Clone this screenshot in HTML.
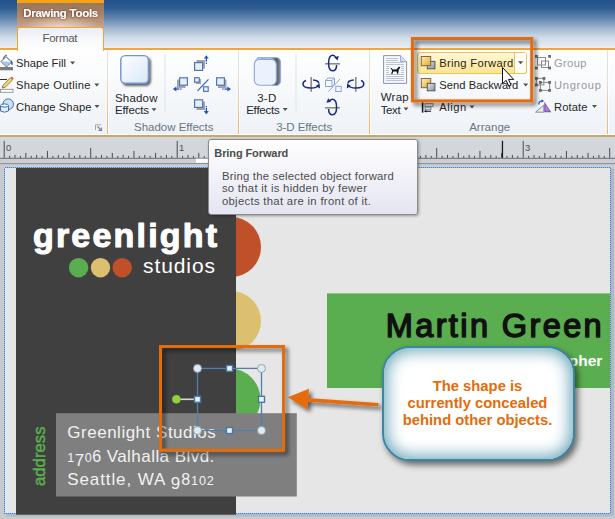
<!DOCTYPE html>
<html><head><meta charset="utf-8">
<style>
*{margin:0;padding:0;box-sizing:border-box}
html,body{width:615px;height:519px;overflow:hidden;background:#c8ccd2;font-family:"Liberation Sans",sans-serif}
.a{position:absolute}
svg{position:absolute;left:0;top:0;overflow:visible}
svg text{font-family:"Liberation Sans",sans-serif;white-space:pre}
</style></head><body>
<div class="a" style="left:0;top:0;width:615px;height:50px;background:linear-gradient(#23508a 0px,#2d5c92 8px,#5f84ae 18px,#9fb5cf 28px,#d2dce8 38px,#e9eef4 48px)"></div>
<div class="a" style="left:17px;top:0;width:87px;height:28px;background:linear-gradient(#f7a115 0,#f7a115 3px,#9a785c 3px,#a48064 12px,#bb967c 22px,#c8a690 28px)"></div>
<div class="a" style="left:17px;top:14px;width:87px;height:14px;background:radial-gradient(ellipse 40px 12px at 50% 100%,rgba(255,235,225,0.75),rgba(255,235,225,0) 100%)"></div>
<div class="a" style="left:0;top:48.3px;width:615px;height:1.5px;background:#f2a53a"></div>
<div class="a" style="left:0;top:50px;width:615px;height:85px;background:linear-gradient(#ffffff 0,#f8fafc 30px,#f1f4f8 70px,#eef1f5 85px)"></div>
<div class="a" style="left:17px;top:27px;width:87px;height:24px;background:linear-gradient(#e9edf2,#f8f9fb 12px,#ffffff);border:1px solid #f2a53a;border-bottom:none;border-radius:3px 3px 0 0"></div>
<div class="a" style="left:18px;top:49px;width:85px;height:3px;background:#ffffff"></div>
<svg width="615" height="519" viewBox="0 0 615 519"><defs><filter id="glow" x="-10%" y="-40%" width="120%" height="180%"><feGaussianBlur in="SourceAlpha" stdDeviation="1.1" result="b"/><feFlood flood-color="#804828" flood-opacity="1"/><feComposite operator="in" in2="b"/><feComponentTransfer><feFuncA type="linear" slope="1.5"/></feComponentTransfer><feMerge><feMergeNode/><feMergeNode in="SourceGraphic"/></feMerge></filter>
<filter id="sh" x="-20%" y="-40%" width="150%" height="200%"><feGaussianBlur in="SourceAlpha" stdDeviation="2.1"/><feOffset dx="2.6" dy="2.6"/><feComponentTransfer><feFuncA type="linear" slope="0.6"/></feComponentTransfer><feMerge><feMergeNode/><feMergeNode in="SourceGraphic"/></feMerge></filter>
<filter id="sh2" x="-20%" y="-20%" width="150%" height="150%"><feGaussianBlur in="SourceAlpha" stdDeviation="1"/><feOffset dx="2" dy="2"/><feComponentTransfer><feFuncA type="linear" slope="0.6"/></feComponentTransfer><feMerge><feMergeNode/><feMergeNode in="SourceGraphic"/></feMerge></filter>
<linearGradient id="gold" x1="0" y1="0" x2="1" y2="1"><stop offset="0" stop-color="#fdf0b8"/><stop offset="1" stop-color="#e8a828"/></linearGradient>
<linearGradient id="grey" x1="0" y1="0" x2="1" y2="1"><stop offset="0" stop-color="#e4e8ee"/><stop offset="1" stop-color="#8a929c"/></linearGradient>
<linearGradient id="lblue" x1="0" y1="0" x2="1" y2="1"><stop offset="0" stop-color="#ffffff"/><stop offset="1" stop-color="#d8e6fa"/></linearGradient>
<linearGradient id="ext" x1="0" y1="0" x2="1" y2="0"><stop offset="0" stop-color="#d8dce2"/><stop offset="0.55" stop-color="#c4c8d0"/><stop offset="0.8" stop-color="#52565e"/><stop offset="1" stop-color="#8a9098"/></linearGradient>
<linearGradient id="sepg" x1="0" y1="0" x2="0" y2="1"><stop offset="0" stop-color="#dde2e8"/><stop offset="0.35" stop-color="#e6dccd"/><stop offset="1" stop-color="#f2b45e"/></linearGradient>
<linearGradient id="btn" x1="0" y1="0" x2="0" y2="1"><stop offset="0" stop-color="#fff9dc"/><stop offset="0.5" stop-color="#ffeeb0"/><stop offset="1" stop-color="#ffe390"/></linearGradient></defs><g filter="url(#glow)"><text x="23.2" y="16.8" font-size="11.5" fill="#ffffff" font-weight="bold" textLength="75" lengthAdjust="spacing" >Drawing Tools</text>
</g><text x="42.5" y="42" font-size="11.5" fill="#595959" textLength="35" lengthAdjust="spacing" >Format</text>
<rect x="107.0" y="50" width="1" height="85" fill="url(#sepg)"/><rect x="108.0" y="50" width="1" height="85" fill="#ffffff" opacity="0.8"/><rect x="238.0" y="50" width="1" height="85" fill="url(#sepg)"/><rect x="239.0" y="50" width="1" height="85" fill="#ffffff" opacity="0.8"/><rect x="369.0" y="50" width="1" height="85" fill="url(#sepg)"/><rect x="370.0" y="50" width="1" height="85" fill="#ffffff" opacity="0.8"/><rect x="607.0" y="50" width="1" height="85" fill="url(#sepg)"/><rect x="608.0" y="50" width="1" height="85" fill="#ffffff" opacity="0.8"/><rect x="164.5" y="54" width="1" height="58" fill="#dfe4ea"/><rect x="295.5" y="54" width="1" height="58" fill="#dfe4ea"/><rect x="0" y="134" width="615" height="1" fill="#ffffff"/><rect x="0" y="135" width="615" height="2" fill="#c9a66c"/>
<g>
<!-- shape fill -->
<path d="M1,61.5 L6,56.5 L11.5,62 L6.5,67 Z" fill="#f4f8fc" stroke="#46505e" stroke-width="1"/>
<path d="M3.5,59 Q4,54.5 7,55.5" fill="none" stroke="#46505e" stroke-width="0.9"/>
<path d="M11,60 Q13.5,62 12.5,65 Q11,65.5 11,63 Z" fill="#2a62c4"/>
<path d="M1.5,61.5 L6.5,66.5 L11,62 Z" fill="#a8c4ec"/>
<rect x="0" y="67" width="13" height="3.3" fill="#7c7c7c"/>
<!-- shape outline -->
<path d="M0,79.5 H7" stroke="#303030" stroke-width="1"/>
<path d="M2.2,88 L3.2,85 L10.5,77.8 L12.6,79.9 L5.3,87.1 Z" fill="#f2d870" stroke="#7c6030" stroke-width="0.8"/>
<path d="M10.5,77.8 L11.5,76.8 Q12.8,76.5 13.6,78.6 L12.6,79.9 Z" fill="#d8684a"/>
<rect x="0.5" y="89.3" width="12.5" height="3" fill="#ffffff" stroke="#909090" stroke-width="0.9"/>
<!-- change shape -->
<circle cx="8.2" cy="104.2" r="5.3" fill="#cfe0f6" stroke="#3e72b4" stroke-width="1"/>
<path d="M0.5,105.5 V111 Q4.5,113.4 8.5,111 V105.5" fill="#e2ecfa" stroke="#3e72b4" stroke-width="1"/>
<ellipse cx="4.5" cy="105.5" rx="4" ry="1.6" fill="#f4f8fe" stroke="#3e72b4" stroke-width="1"/>
<!-- dialog launcher -->
<path d="M95.5,130 V124.8 H101" fill="none" stroke="#9aa0a8" stroke-width="0.9"/>
<path d="M97.5,126.5 L101.5,130.5 M101.5,127.5 V130.5 H98.5" fill="none" stroke="#7a8088" stroke-width="1.1"/>

<!-- shadow effects big -->
<rect x="120.8" y="55.6" width="27.6" height="27.6" rx="4.5" fill="url(#lblue)" stroke="#7093d2" stroke-width="1.4" filter="url(#sh2)"/>
<!-- nudge icons -->
<g stroke-width="1.2">
<rect x="196.5" y="60" width="8.5" height="8.5" fill="#a4a4a4"/>
<rect x="194.6" y="62.6" width="8" height="7.8" fill="#e8f0fc" stroke="#4b74c2"/>
<rect x="177" y="79.5" width="8.5" height="8.5" fill="#a4a4a4"/>
<rect x="179.6" y="77.8" width="7.8" height="7.4" fill="#e8f0fc" stroke="#4b74c2"/>
<rect x="196" y="79" width="5" height="5" fill="#a4a4a4"/>
<rect x="194.6" y="77.8" width="4.6" height="4.4" fill="#eef4fc" stroke="#4b74c2"/>
<rect x="203.6" y="86.8" width="4.6" height="4.6" fill="#eef4fc" stroke="#4b74c2"/>
<path d="M197.5,90.8 L208.5,79.3" stroke="#2a5ac0" stroke-width="1.1"/>
<rect x="218" y="79.5" width="8.5" height="8.5" fill="#a4a4a4"/>
<rect x="216.6" y="77.8" width="7.8" height="7.4" fill="#e8f0fc" stroke="#4b74c2"/>
<rect x="196.5" y="101.5" width="8.5" height="8.5" fill="#a4a4a4"/>
<rect x="194.6" y="99.8" width="8" height="7.6" fill="#e8f0fc" stroke="#4b74c2"/>
</g>
<g fill="#1f56c8" stroke="none">
<path d="M206.3,55.2 L203.8,58.6 H208.8 Z"/><rect x="205.7" y="58" width="1.3" height="3.6"/><rect x="205.7" y="62.6" width="1.3" height="1.3"/>
<path d="M172.8,89 L176.4,86.6 V91.4 Z"/><rect x="176" y="88.4" width="3.4" height="1.3"/><rect x="180.3" y="88.4" width="1.3" height="1.3"/>
<path d="M231,89 L227.4,86.6 V91.4 Z"/><rect x="224.5" y="88.4" width="3.4" height="1.3"/><rect x="222.3" y="88.4" width="1.3" height="1.3"/>
<path d="M206.3,114.4 L203.8,111 H208.8 Z"/><rect x="205.7" y="108" width="1.3" height="3.6"/><rect x="205.7" y="106" width="1.3" height="1.3"/>
</g>

<!-- 3-D big icon -->
<path d="M257.5,57.6 H276 Q280.6,57.8 280.6,62.5 V80.5 Q280.6,84.8 276.5,85.5 L272,85.5 V60 Z" fill="url(#ext)" stroke="#8ea8d8" stroke-width="0.9"/>
<rect x="254.3" y="59.4" width="22" height="25.8" rx="5" fill="#ebf2fd" stroke="#8aa6da" stroke-width="1.1"/>
<path d="M255.2,61.5 Q256,57.8 259.5,57.6" fill="none" stroke="#8ea8d8" stroke-width="0.9"/>
<!-- tilt icons -->
<g fill="none" stroke-width="1.5">
<path d="M325,63.8 H340" stroke="#8c8c8c" stroke-width="1.6"/>
<path d="M336.2,58 Q334.5,55 332.5,55.2 Q328.6,55.6 328.6,63 Q328.6,70.8 332.5,70.8 Q336.6,70.8 336.6,65" stroke="#1a2a86"/>
<path d="M311.2,77 V91.7" stroke="#8c8c8c" stroke-width="1.6"/>
<path d="M306,80.5 Q303,81.5 303,84 Q303,88 311,88 Q317.5,88 318.8,85" stroke="#1a2a86"/>
<path d="M313,80 Q318.8,80.5 318.8,83.5" stroke="#1a2a86"/>
<path d="M355.8,77 V91.7" stroke="#8c8c8c" stroke-width="1.6"/>
<path d="M361,80.5 Q363.8,81.5 363.8,84 Q363.8,88 355.8,88 Q349.5,88 348,85" stroke="#1a2a86"/>
<path d="M353.8,80 Q348,80.5 348,83.5" stroke="#1a2a86"/>
<path d="M325,107.8 H340" stroke="#8c8c8c" stroke-width="1.6"/>
<path d="M329,102 Q330.5,99 332.5,99.2 Q336.6,99.6 336.6,107 Q336.6,114.8 332.5,114.8 Q328.6,114.8 328.6,109" stroke="#1a2a86"/>
</g>
<g fill="#1a2a86">
<path d="M334.2,57.3 L338.8,56 L337.6,60.6 Z"/>
<path d="M315.8,86 L319.6,83.4 L320,88.6 Z"/>
<path d="M351,86 L347.2,83.4 L346.8,88.6 Z"/>
<path d="M331,101.8 L326.4,102.8 L328.2,98.3 Z"/>
</g>
<g fill="none" stroke="#7a9ad6" stroke-width="0.9">
<path d="M325.5,80.5 L328,78 H334.5 V84 L332,86.5 H325.5 Z M325.5,80.5 H332 V86.5 M332,80.5 L334.5,78"/>
<rect x="335.8" y="86.3" width="5.4" height="5.2"/>
<path d="M328.5,91.5 L340,79"/>
</g>

<!-- wrap text -->
<path d="M383.6,55.6 H400.6 L406.6,61.6 V83.4 H383.6 Z" fill="#f6f8fb" stroke="#8696ae" stroke-width="1"/>
<path d="M400.6,55.6 V61.6 H406.6" fill="#d4e0f2" stroke="#8696ae" stroke-width="0.8"/>
<g stroke="#b2bed2" stroke-width="0.9">
<path d="M386,58.5 H398 M386,60.5 H398 M386,62.5 H404 M386,64.5 H404 M386,66.5 H389 M401,66.5 H404 M386,68.5 H389 M401,68.5 H404 M386,70.5 H389 M401,70.5 H404 M386,72.5 H389 M401,72.5 H404 M386,74.5 H404 M386,76.5 H404 M386,78.5 H404 M386,80.5 H404"/>
</g>
<path d="M390.5,67.5 Q392,68.5 393,69.5 H396.5 L398.5,67 Q400,66.5 400.3,67.6 L398.8,69.5 L398.2,73.8 L397,73.8 L396.8,71.5 L393.2,71.5 L392.4,74 L391.2,74 L392.2,70.6 Q390.6,69 390.5,67.5 Z" fill="#111"/>

<!-- bring forward button -->
<rect x="417.5" y="52.5" width="109" height="21" rx="2.5" fill="url(#btn)" stroke="#e6c45e" stroke-width="1"/>
<rect x="514.5" y="53" width="11.5" height="20" fill="#fffdf4"/>
<path d="M514.5,53 V73" stroke="#e6c45e" stroke-width="1"/>
<path d="M526.5,55 V71 Q526.5,73.5 524,73.5 H514.5" fill="none" stroke="#e6c45e" stroke-width="1"/>
<!-- BF / SB icons -->
<rect x="427.3" y="61.4" width="7.6" height="7.4" fill="url(#grey)" stroke="#4e5866" stroke-width="1"/>
<rect x="421.3" y="56.5" width="9.4" height="9.2" fill="url(#gold)" stroke="#7a6848" stroke-width="1"/>
<rect x="421.3" y="78.5" width="9.4" height="9.2" fill="url(#gold)" stroke="#7a6848" stroke-width="1"/>
<rect x="427.3" y="83.4" width="7.6" height="7.4" fill="url(#grey)" stroke="#4e5866" stroke-width="1"/>
<!-- align -->
<rect x="421.8" y="102.2" width="1.6" height="10.4" fill="#1a1a1a"/>
<rect x="425" y="103.6" width="8" height="2.8" fill="#e2e6ee" stroke="#7c8494" stroke-width="0.9"/>
<rect x="425" y="107.2" width="6" height="2.6" fill="#e2e6ee" stroke="#7c8494" stroke-width="0.9"/>
<path d="M424.5,111.3 H431" stroke="#1a1a1a" stroke-width="1"/>
<path d="M424.2,111.3 L426.4,109.8 V112.8 Z" fill="#1a1a1a"/>
<!-- group -->
<g fill="none" stroke="#8a8a8a" stroke-width="1">
<rect x="537.5" y="57.5" width="8" height="7.5"/><rect x="541.5" y="61" width="7" height="6.5"/>
</g>
<g fill="#6a6a6a">
<rect x="535" y="55" width="2.8" height="2.8"/><rect x="548.2" y="55" width="2.8" height="2.8"/>
<rect x="535" y="66.6" width="2.8" height="2.8"/><rect x="548.2" y="66.6" width="2.8" height="2.8"/>
</g>
<!-- ungroup -->
<g fill="none" stroke="#8a8a8a" stroke-width="1">
<rect x="536.4" y="78.4" width="7.5" height="6.5"/><rect x="540.4" y="82.4" width="9.2" height="8"/>
</g>
<g fill="#6a6a6a">
<rect x="535" y="77" width="2.8" height="2.8"/><rect x="542.6" y="77" width="2.8" height="2.8"/>
<rect x="535" y="83.6" width="2.8" height="2.8"/>
<rect x="539" y="81" width="2.8" height="2.8"/><rect x="548.2" y="81" width="2.8" height="2.8"/>
<rect x="539" y="89" width="2.8" height="2.8"/><rect x="548.2" y="89" width="2.8" height="2.8"/>
</g>
<!-- rotate -->
<path d="M535.5,112.2 L543.8,105 V112.2 Z" fill="#e8eaf0" stroke="#7c8494" stroke-width="0.9"/>
<path d="M544.3,101.8 L551.2,112.3 H544.3 Z" fill="#7a48b0"/>
<path d="M545.5,104.5 L549.5,111.3 H545.5 Z" fill="#a886d4"/>
<path d="M538.8,104.5 Q538.8,101 542,101" fill="none" stroke="#2050b8" stroke-width="1.2"/>
<path d="M541.5,99.2 L544,101 L541.5,102.8 Z" fill="#2050b8"/>
</g>
<text x="16" y="67" font-size="11.2" fill="#262626" textLength="50" lengthAdjust="spacing" >Shape Fill</text>
<text x="16" y="89" font-size="11.2" fill="#262626" textLength="74.5" lengthAdjust="spacing" >Shape Outline</text>
<text x="16" y="110.5" font-size="11.2" fill="#262626" textLength="75.5" lengthAdjust="spacing" >Change Shape</text>
<text x="115" y="101.5" font-size="11.5" fill="#262626" textLength="42.5" lengthAdjust="spacing" >Shadow</text>
<text x="115" y="114" font-size="11.5" fill="#262626" textLength="34" lengthAdjust="spacing" >Effects</text>
<text x="134" y="131" font-size="11.5" fill="#6b7585" textLength="79.5" lengthAdjust="spacing" >Shadow Effects</text>
<text x="257.2" y="101.5" font-size="11.5" fill="#262626" textLength="19" lengthAdjust="spacing" >3-D</text>
<text x="246.2" y="114" font-size="11.5" fill="#262626" textLength="33.5" lengthAdjust="spacing" >Effects</text>
<text x="276.2" y="131" font-size="11.5" fill="#6b7585" textLength="56" lengthAdjust="spacing" >3-D Effects</text>
<text x="380.7" y="100.5" font-size="11.5" fill="#262626" textLength="28" lengthAdjust="spacing" >Wrap</text>
<text x="380.7" y="113.9" font-size="11.5" fill="#262626" textLength="20" lengthAdjust="spacing" >Text</text>
<text x="439.2" y="67.2" font-size="11.2" fill="#262626" textLength="74" lengthAdjust="spacing" >Bring Forward</text>
<text x="439.2" y="88.8" font-size="11.2" fill="#262626" textLength="79" lengthAdjust="spacing" >Send Backward</text>
<text x="439.2" y="111.4" font-size="11.2" fill="#262626" textLength="27" lengthAdjust="spacing" >Align</text>
<text x="554" y="67.2" font-size="11.2" fill="#9a9aa2" textLength="32.5" lengthAdjust="spacing" >Group</text>
<text x="554" y="89" font-size="11.2" fill="#9a9aa2" textLength="47" lengthAdjust="spacing" >Ungroup</text>
<text x="554" y="110.9" font-size="11.2" fill="#262626" textLength="33.5" lengthAdjust="spacing" >Rotate</text>
<text x="469.2" y="130.8" font-size="11.5" fill="#6b7585" textLength="41" lengthAdjust="spacing" >Arrange</text>
<path d="M70.1,61.5 h5 l-2.5,3 z" fill="#505050"/><path d="M94.3,83.5 h5 l-2.5,3 z" fill="#505050"/><path d="M94.5,105.0 h5 l-2.5,3 z" fill="#505050"/><path d="M151.5,108.3 h5 l-2.5,3 z" fill="#505050"/><path d="M282.7,108.0 h5 l-2.5,3 z" fill="#505050"/><path d="M403.5,107.5 h5 l-2.5,3 z" fill="#505050"/><path d="M518.1,61.3 h5 l-2.5,3 z" fill="#505050"/><path d="M523.2,83.5 h5 l-2.5,3 z" fill="#505050"/><path d="M469.5,105.5 h5 l-2.5,3 z" fill="#505050"/><path d="M592.0,105.0 h5 l-2.5,3 z" fill="#505050"/><rect x="412.4" y="38.5" width="119.3" height="62.4" fill="none" stroke="#e46c0a" stroke-width="3" filter="url(#sh)"/><path d="M502.5,67.5 V83.7 L506.1,80.3 L508.7,86.1 L511.1,85.1 L508.5,79.4 L513.7,79.4 Z" fill="#ffffff" stroke="#111111" stroke-width="1" stroke-linejoin="miter"/><rect x="0" y="137" width="615" height="21" fill="#d3d6db"/><rect x="0" y="157.8" width="615" height="1.2" fill="#5e6064"/><rect x="0" y="158.7" width="615" height="4.5" fill="#cbcfd4"/><rect x="196" y="158.7" width="222" height="4" fill="#ffffff"/><rect x="0" y="163" width="615" height="1.4" fill="#8e949c"/><rect x="0" y="164.4" width="615" height="3" fill="#c9cdd2"/><rect x="3.70" y="140.9" width="1" height="17" fill="#4a4c50"/><rect x="9.11" y="155.9" width="1" height="2" fill="#4a4c50"/><rect x="14.51" y="154.9" width="1" height="3" fill="#4a4c50"/><rect x="19.92" y="155.9" width="1" height="2" fill="#4a4c50"/><rect x="25.33" y="152.9" width="1" height="5" fill="#4a4c50"/><rect x="30.73" y="155.9" width="1" height="2" fill="#4a4c50"/><rect x="36.14" y="154.9" width="1" height="3" fill="#4a4c50"/><rect x="41.54" y="155.9" width="1" height="2" fill="#4a4c50"/><rect x="46.95" y="150.9" width="1" height="7" fill="#4a4c50"/><rect x="52.36" y="155.9" width="1" height="2" fill="#4a4c50"/><rect x="57.76" y="154.9" width="1" height="3" fill="#4a4c50"/><rect x="63.17" y="155.9" width="1" height="2" fill="#4a4c50"/><rect x="68.57" y="152.9" width="1" height="5" fill="#4a4c50"/><rect x="73.98" y="155.9" width="1" height="2" fill="#4a4c50"/><rect x="79.39" y="154.9" width="1" height="3" fill="#4a4c50"/><rect x="84.79" y="155.9" width="1" height="2" fill="#4a4c50"/><rect x="90.20" y="147.9" width="1" height="10" fill="#4a4c50"/><rect x="95.61" y="155.9" width="1" height="2" fill="#4a4c50"/><rect x="101.01" y="154.9" width="1" height="3" fill="#4a4c50"/><rect x="106.42" y="155.9" width="1" height="2" fill="#4a4c50"/><rect x="111.82" y="152.9" width="1" height="5" fill="#4a4c50"/><rect x="117.23" y="155.9" width="1" height="2" fill="#4a4c50"/><rect x="122.64" y="154.9" width="1" height="3" fill="#4a4c50"/><rect x="128.04" y="155.9" width="1" height="2" fill="#4a4c50"/><rect x="133.45" y="150.9" width="1" height="7" fill="#4a4c50"/><rect x="138.86" y="155.9" width="1" height="2" fill="#4a4c50"/><rect x="144.26" y="154.9" width="1" height="3" fill="#4a4c50"/><rect x="149.67" y="155.9" width="1" height="2" fill="#4a4c50"/><rect x="155.07" y="152.9" width="1" height="5" fill="#4a4c50"/><rect x="160.48" y="155.9" width="1" height="2" fill="#4a4c50"/><rect x="165.89" y="154.9" width="1" height="3" fill="#4a4c50"/><rect x="171.29" y="155.9" width="1" height="2" fill="#4a4c50"/><rect x="176.70" y="140.9" width="1" height="17" fill="#4a4c50"/><rect x="182.11" y="155.9" width="1" height="2" fill="#4a4c50"/><rect x="187.51" y="154.9" width="1" height="3" fill="#4a4c50"/><rect x="192.92" y="155.9" width="1" height="2" fill="#4a4c50"/><rect x="198.32" y="152.9" width="1" height="5" fill="#4a4c50"/><rect x="203.73" y="155.9" width="1" height="2" fill="#4a4c50"/><rect x="209.14" y="154.9" width="1" height="3" fill="#4a4c50"/><rect x="214.54" y="155.9" width="1" height="2" fill="#4a4c50"/><rect x="219.95" y="150.9" width="1" height="7" fill="#4a4c50"/><rect x="225.36" y="155.9" width="1" height="2" fill="#4a4c50"/><rect x="230.76" y="154.9" width="1" height="3" fill="#4a4c50"/><rect x="236.17" y="155.9" width="1" height="2" fill="#4a4c50"/><rect x="241.57" y="152.9" width="1" height="5" fill="#4a4c50"/><rect x="246.98" y="155.9" width="1" height="2" fill="#4a4c50"/><rect x="252.39" y="154.9" width="1" height="3" fill="#4a4c50"/><rect x="257.79" y="155.9" width="1" height="2" fill="#4a4c50"/><rect x="263.20" y="147.9" width="1" height="10" fill="#4a4c50"/><rect x="268.61" y="155.9" width="1" height="2" fill="#4a4c50"/><rect x="274.01" y="154.9" width="1" height="3" fill="#4a4c50"/><rect x="279.42" y="155.9" width="1" height="2" fill="#4a4c50"/><rect x="284.83" y="152.9" width="1" height="5" fill="#4a4c50"/><rect x="290.23" y="155.9" width="1" height="2" fill="#4a4c50"/><rect x="295.64" y="154.9" width="1" height="3" fill="#4a4c50"/><rect x="301.04" y="155.9" width="1" height="2" fill="#4a4c50"/><rect x="306.45" y="150.9" width="1" height="7" fill="#4a4c50"/><rect x="311.86" y="155.9" width="1" height="2" fill="#4a4c50"/><rect x="317.26" y="154.9" width="1" height="3" fill="#4a4c50"/><rect x="322.67" y="155.9" width="1" height="2" fill="#4a4c50"/><rect x="328.08" y="152.9" width="1" height="5" fill="#4a4c50"/><rect x="333.48" y="155.9" width="1" height="2" fill="#4a4c50"/><rect x="338.89" y="154.9" width="1" height="3" fill="#4a4c50"/><rect x="344.29" y="155.9" width="1" height="2" fill="#4a4c50"/><rect x="349.70" y="140.9" width="1" height="17" fill="#4a4c50"/><rect x="355.11" y="155.9" width="1" height="2" fill="#4a4c50"/><rect x="360.51" y="154.9" width="1" height="3" fill="#4a4c50"/><rect x="365.92" y="155.9" width="1" height="2" fill="#4a4c50"/><rect x="371.33" y="152.9" width="1" height="5" fill="#4a4c50"/><rect x="376.73" y="155.9" width="1" height="2" fill="#4a4c50"/><rect x="382.14" y="154.9" width="1" height="3" fill="#4a4c50"/><rect x="387.54" y="155.9" width="1" height="2" fill="#4a4c50"/><rect x="392.95" y="150.9" width="1" height="7" fill="#4a4c50"/><rect x="398.36" y="155.9" width="1" height="2" fill="#4a4c50"/><rect x="403.76" y="154.9" width="1" height="3" fill="#4a4c50"/><rect x="409.17" y="155.9" width="1" height="2" fill="#4a4c50"/><rect x="414.58" y="152.9" width="1" height="5" fill="#4a4c50"/><rect x="419.98" y="155.9" width="1" height="2" fill="#4a4c50"/><rect x="425.39" y="154.9" width="1" height="3" fill="#4a4c50"/><rect x="430.79" y="155.9" width="1" height="2" fill="#4a4c50"/><rect x="436.20" y="147.9" width="1" height="10" fill="#4a4c50"/><rect x="441.61" y="155.9" width="1" height="2" fill="#4a4c50"/><rect x="447.01" y="154.9" width="1" height="3" fill="#4a4c50"/><rect x="452.42" y="155.9" width="1" height="2" fill="#4a4c50"/><rect x="457.83" y="152.9" width="1" height="5" fill="#4a4c50"/><rect x="463.23" y="155.9" width="1" height="2" fill="#4a4c50"/><rect x="468.64" y="154.9" width="1" height="3" fill="#4a4c50"/><rect x="474.04" y="155.9" width="1" height="2" fill="#4a4c50"/><rect x="479.45" y="150.9" width="1" height="7" fill="#4a4c50"/><rect x="484.86" y="155.9" width="1" height="2" fill="#4a4c50"/><rect x="490.26" y="154.9" width="1" height="3" fill="#4a4c50"/><rect x="495.67" y="155.9" width="1" height="2" fill="#4a4c50"/><rect x="501.08" y="152.9" width="1" height="5" fill="#4a4c50"/><rect x="506.48" y="155.9" width="1" height="2" fill="#4a4c50"/><rect x="511.89" y="154.9" width="1" height="3" fill="#4a4c50"/><rect x="517.29" y="155.9" width="1" height="2" fill="#4a4c50"/><rect x="522.70" y="140.9" width="1" height="17" fill="#4a4c50"/><rect x="528.11" y="155.9" width="1" height="2" fill="#4a4c50"/><rect x="533.51" y="154.9" width="1" height="3" fill="#4a4c50"/><rect x="538.92" y="155.9" width="1" height="2" fill="#4a4c50"/><rect x="544.33" y="152.9" width="1" height="5" fill="#4a4c50"/><rect x="549.73" y="155.9" width="1" height="2" fill="#4a4c50"/><rect x="555.14" y="154.9" width="1" height="3" fill="#4a4c50"/><rect x="560.54" y="155.9" width="1" height="2" fill="#4a4c50"/><rect x="565.95" y="150.9" width="1" height="7" fill="#4a4c50"/><rect x="571.36" y="155.9" width="1" height="2" fill="#4a4c50"/><rect x="576.76" y="154.9" width="1" height="3" fill="#4a4c50"/><rect x="582.17" y="155.9" width="1" height="2" fill="#4a4c50"/><rect x="587.58" y="152.9" width="1" height="5" fill="#4a4c50"/><rect x="592.98" y="155.9" width="1" height="2" fill="#4a4c50"/><rect x="598.39" y="154.9" width="1" height="3" fill="#4a4c50"/><rect x="603.79" y="155.9" width="1" height="2" fill="#4a4c50"/><rect x="609.20" y="147.9" width="1" height="10" fill="#4a4c50"/><rect x="501.8" y="140.8" width="1.3" height="17" fill="#1a1a1a"/><text x="5.8999999999999995" y="150.6" font-size="9.5" fill="#505050" >0</text>
<text x="178.9" y="150.6" font-size="9.5" fill="#505050" >1</text>
<text x="524.9" y="150.6" font-size="9.5" fill="#505050" >3</text>

<rect x="0" y="167" width="615" height="352" fill="#c6cacf"/>
<rect x="610.7" y="169" width="3" height="347" fill="#b2b6bc"/>
<rect x="6" y="513.5" width="606" height="3" fill="#b6bac0"/>
<rect x="4.3" y="167.3" width="606.4" height="346.2" fill="#e6e6e6"/>
<g>
<circle cx="231" cy="247" r="30" fill="#c0502a"/>
<circle cx="231" cy="321" r="30" fill="#dcc070"/>
<circle cx="229.5" cy="399.4" r="31" fill="#5aae50"/>
</g>
<rect x="4.5" y="167.5" width="606" height="346" fill="none" stroke="#5a6ee6" stroke-width="1" stroke-dasharray="1 1" shape-rendering="crispEdges"/><rect x="4.5" y="167.5" width="606" height="346" fill="none" stroke="#70d0e6" stroke-width="1" stroke-dasharray="1 1" stroke-dashoffset="1" shape-rendering="crispEdges"/>
<rect x="16" y="168" width="220" height="346.7" fill="#404040"/>
<circle cx="78.6" cy="267.7" r="9.7" fill="#5aae50"/>
<circle cx="100.5" cy="267.7" r="9.7" fill="#dcc070"/>
<circle cx="122.2" cy="267.7" r="9.7" fill="#c0502a"/>
<rect x="327" y="293.4" width="283" height="94.6" fill="#5aae50"/>
<rect x="56" y="413.2" width="240.8" height="83.3" fill="#7f7f7f"/>
<text x="33" y="247.3" font-size="34" fill="#ffffff" font-weight="bold" textLength="184" lengthAdjust="spacing" stroke="#ffffff" stroke-width="1.1" stroke-linejoin="round">greenlight</text>
<text x="143" y="273.3" font-size="21" fill="#ffffff" textLength="72" lengthAdjust="spacing" >studios</text>
<text x="385.7" y="336.8" font-size="32.5" fill="#111111" textLength="216" lengthAdjust="spacing" stroke="#111111" stroke-width="1.5" stroke-linejoin="round">Martin Green</text>
<text x="602.3" y="366" font-size="15.5" fill="#ffffff" font-weight="bold" text-anchor="end" >Photographer</text>
<text x="67.3" y="438" font-size="17" fill="#f2f2f2" textLength="148.5" lengthAdjust="spacing" >Greenlight Studios</text>
<text x="67.3" y="462.2" font-size="17" fill="#f2f2f2" textLength="147" lengthAdjust="spacing"><tspan font-size="12.6">1</tspan><tspan y="465.5">7</tspan><tspan y="462.2" font-size="12.6">0</tspan><tspan font-size="16">6</tspan> Valhalla Blvd.</text><text x="67.3" y="485" font-size="17" fill="#f2f2f2" textLength="146.5" lengthAdjust="spacing">Seattle, WA <tspan y="488.6">9</tspan><tspan y="485" font-size="16">8</tspan><tspan font-size="12.6">102</tspan></text><g transform="translate(45.2,486) rotate(-90)"><text x="0" y="0" font-size="16.7" fill="#5aae50" textLength="59.5" lengthAdjust="spacing" stroke="#5aae50" stroke-width="0.5">address</text>
</g><rect x="160.5" y="346.5" width="123" height="103.8" fill="none" stroke="#e46c0a" stroke-width="3" filter="url(#sh)"/>
<line x1="180" y1="399.3" x2="197.5" y2="399.3" stroke="#d6d6d6" stroke-width="1.6"/>
<rect x="197.5" y="368.4" width="64" height="62.1" fill="none" stroke="#4f7fb0" stroke-width="1.3"/>
<circle cx="176.4" cy="399.3" r="4" fill="#84d83a" stroke="#a6b040" stroke-width="0.8"/>
<g fill="#dcecf0" stroke="#8aa0a8" stroke-width="0.9">
<circle cx="197.5" cy="368.4" r="4"/><circle cx="261.5" cy="368.4" r="4"/>
<circle cx="197.5" cy="430.5" r="4"/><circle cx="261.5" cy="430.5" r="4"/>
</g>
<g fill="#e6f6fa" stroke="#4a77a8" stroke-width="1.4">
<rect x="226.5" y="365.4" width="6" height="6"/><rect x="226.5" y="427.5" width="6" height="6"/>
<rect x="194.5" y="396.3" width="6" height="6"/><rect x="258.5" y="396.3" width="6" height="6"/>
</g>
<g filter="url(#sh)">
<line x1="304" y1="399.6" x2="378.5" y2="404.8" stroke="#e46c0a" stroke-width="3.6"/>
<polygon points="287.8,397.3 309,388.8 307.5,409.2" fill="#e46c0a"/>
</g>
</svg>
<div class="a" style="left:382px;top:346px;width:193px;height:114.6px;border:2px solid #3a87a5;border-radius:28px;background:#fff;box-shadow:3px 4px 6px rgba(0,0,0,0.55), inset 0 0 16px 3px #6aa6b8"></div>
<div class="a" style="left:380.5px;top:378px;width:194px;text-align:center;font-size:14.8px;line-height:17.2px;font-weight:bold;color:#e36c0a">The shape is<br>currently concealed<br>behind other objects.</div>
<div class="a" style="left:208px;top:139px;width:210px;height:76px;border:1px solid #8a8a8a;border-radius:3px;background:linear-gradient(#ffffff,#e4e5f1);box-shadow:1px 1px 3px rgba(0,0,0,0.35)"></div>
<svg width="615" height="519" viewBox="0 0 615 519"><text x="214.3" y="157" font-size="11" fill="#4c4c4c" font-weight="bold" textLength="74" lengthAdjust="spacing" >Bring Forward</text>
<text x="221.9" y="179.6" font-size="11.3" fill="#4c4c4c" textLength="172" lengthAdjust="spacing" >Bring the selected object forward</text>
<text x="221.9" y="192.3" font-size="11.3" fill="#4c4c4c" textLength="145" lengthAdjust="spacing" >so that it is hidden by fewer</text>
<text x="221.9" y="205.4" font-size="11.3" fill="#4c4c4c" textLength="149" lengthAdjust="spacing" >objects that are in front of it.</text>
</svg></body></html>
